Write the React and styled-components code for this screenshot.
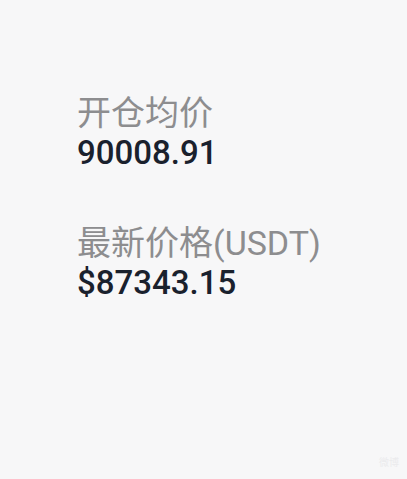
import styled, { createGlobalStyle } from 'styled-components'

const GlobalStyle = createGlobalStyle`
	html, body {
		margin: 0;
		padding: 0;
		background: #f7f7f8;
	}
	body {
		font-family: Roboto, "Noto Sans CJK SC", sans-serif;
	}
`

const Page = styled.div`
	width: 407px;
	height: 479px;
	box-sizing: border-box;
	padding: 93px 0 0 77px;
	display: flex;
	flex-direction: column;
	gap: 50px;
	position: relative;
`

const Field = styled.div`
	display: flex;
	flex-direction: column;
`

const Label = styled.div`
	font-size: 34px;
	line-height: 40px;
	color: #8d8d8f;
	font-weight: 400;
`

const Value = styled.div`
	font-size: 33px;
	line-height: 40px;
	color: #1a212d;
	font-weight: 500;
`

const Watermark = styled.div`
	position: absolute;
	right: 8px;
	bottom: 10px;
	font-size: 10px;
	color: #ebebed;
`

const fields = [
	{ label: '开仓均价', value: '90008.91' },
	{ label: '最新价格(USDT)', value: '$87343.15' },
]

const App = () => {
	return (
		<>
			<GlobalStyle />
			<Page>
				{fields.map((f) => (
					<Field key={f.label}>
						<Label>{f.label}</Label>
						<Value>{f.value}</Value>
					</Field>
				))}
				<Watermark>微博</Watermark>
			</Page>
		</>
	)
}

export default App
